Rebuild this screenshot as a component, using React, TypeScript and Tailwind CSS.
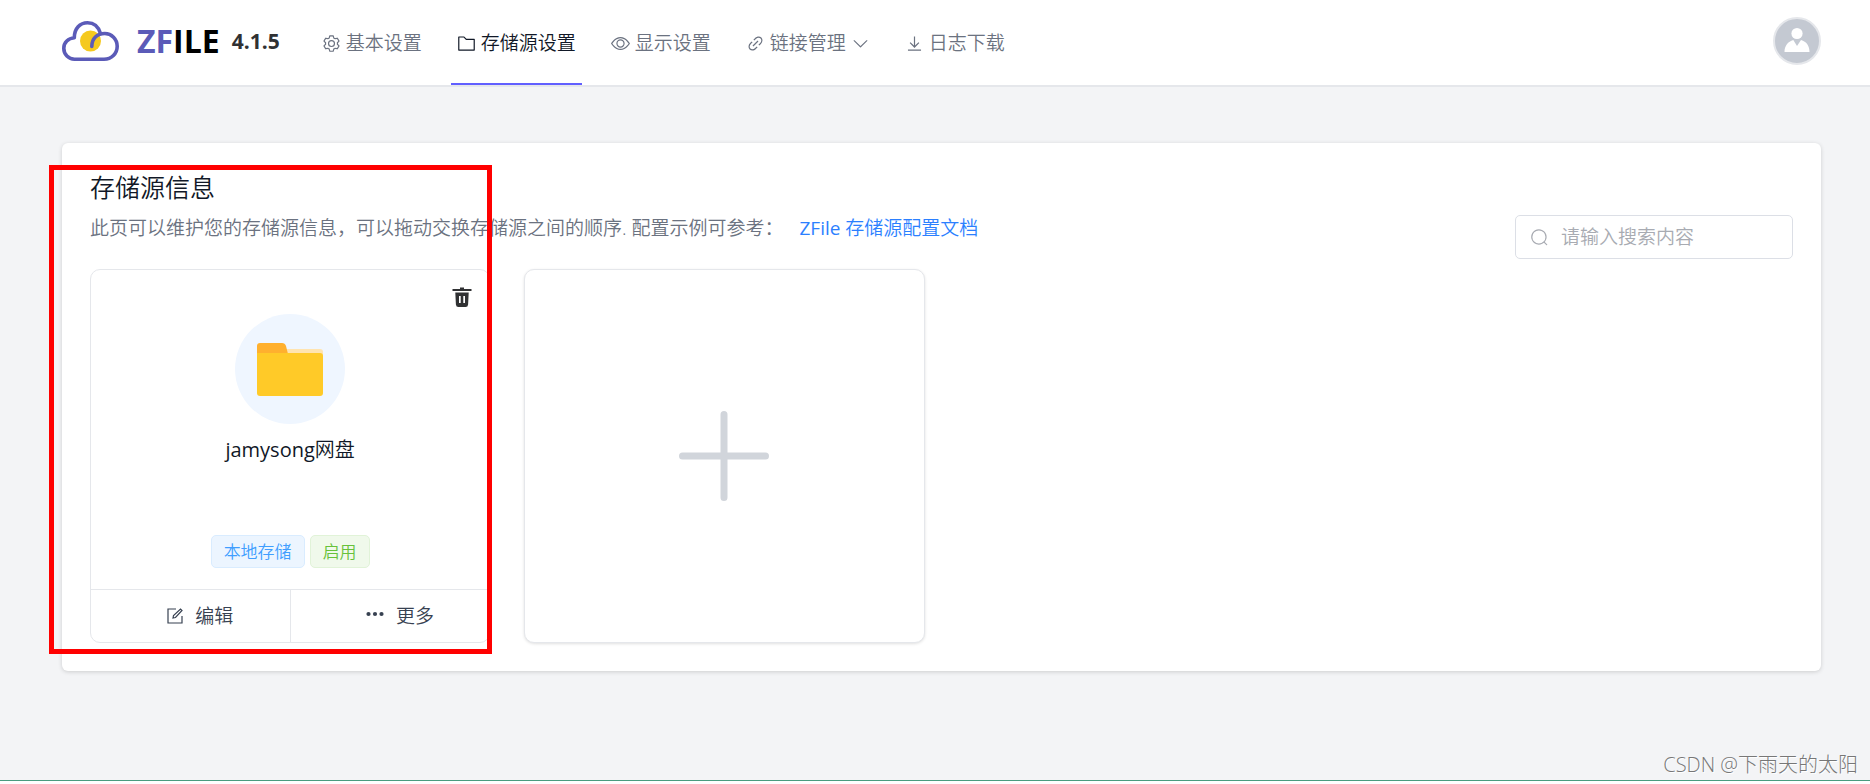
import type { ReactNode } from 'react';

const paths = {
    setting:
        'M600.704 64a32 32 0 0 1 30.464 22.208l35.2 109.376c14.784 7.232 28.928 15.36 42.432 24.512l112.384-24.192a32 32 0 0 1 34.432 15.36L944.32 364.8a32 32 0 0 1-4.032 37.504l-77.12 85.12a357.12 357.12 0 0 1 0 49.024l77.12 85.248a32 32 0 0 1 4.032 37.504l-88.704 153.6a32 32 0 0 1-34.432 15.296L708.8 803.904c-13.44 9.088-27.648 17.28-42.368 24.512l-35.264 109.376A32 32 0 0 1 600.704 960H423.296a32 32 0 0 1-30.464-22.208L357.696 828.48a351.616 351.616 0 0 1-42.56-24.64l-112.32 24.256a32 32 0 0 1-34.432-15.36L79.68 659.2a32 32 0 0 1 4.032-37.504l77.12-85.248a357.12 357.12 0 0 1 0-48.896l-77.12-85.248A32 32 0 0 1 79.68 364.8l88.704-153.6a32 32 0 0 1 34.432-15.296l112.32 24.256c13.568-9.152 27.776-17.408 42.56-24.64l35.2-109.312A32 32 0 0 1 423.232 64H600.64zm-23.424 64H446.72l-36.352 113.088-24.512 11.968a294.113 294.113 0 0 0-34.816 20.096l-22.656 15.36-116.224-25.088-65.28 113.152 79.68 88.192-1.92 27.136a293.12 293.12 0 0 0 0 40.192l1.92 27.136-79.808 88.192 65.344 113.152 116.224-25.024 22.656 15.296a294.113 294.113 0 0 0 34.816 20.096l24.512 11.968L446.72 896h130.688l36.48-113.152 24.448-11.904a288.282 288.282 0 0 0 34.752-20.096l22.592-15.296 116.288 25.024 65.28-113.152-79.744-88.192 1.92-27.136a293.12 293.12 0 0 0 0-40.256l-1.92-27.136 79.808-88.128-65.344-113.152-116.288 24.96-22.592-15.232a287.616 287.616 0 0 0-34.752-20.096l-24.448-11.904L577.344 128zM512 320a192 192 0 1 1 0 384 192 192 0 0 1 0-384zm0 64a128 128 0 1 0 0 256 128 128 0 0 0 0-256z',
    folder:
        'M128 192v640h768V320H485.76L357.504 192H128zm-32-64h287.872l128.384 128H928a32 32 0 0 1 32 32v576a32 32 0 0 1-32 32H96a32 32 0 0 1-32-32V160a32 32 0 0 1 32-32z',
    view:
        'M512 160c320 0 512 352 512 352S832 864 512 864 0 512 0 512s192-352 512-352zm0 64c-225.28 0-384.128 208.064-436.8 288 52.608 79.872 211.456 288 436.8 288 225.28 0 384.128-208.064 436.8-288-52.608-79.872-211.456-288-436.8-288zm0 64a224 224 0 1 1 0 448 224 224 0 0 1 0-448zm0 64a160.192 160.192 0 0 0-160 160c0 88.192 71.744 160 160 160s160-71.808 160-160-71.744-160-160-160z',
    link:
        'M715.648 625.152 670.4 579.904l90.496-90.56c75.008-74.944 85.12-186.368 22.656-248.896-62.528-62.464-173.952-52.352-248.96 22.656L444.16 353.6l-45.248-45.248 90.496-90.496c100.032-99.968 251.968-110.08 339.456-22.656 87.488 87.488 77.312 239.424-22.656 339.456l-90.496 90.496zm-90.496 90.496-90.496 90.496C434.624 906.112 282.688 916.224 195.2 828.8c-87.488-87.488-77.312-239.424 22.656-339.456l90.496-90.496 45.248 45.248-90.496 90.56c-75.008 74.944-85.12 186.368-22.656 248.896 62.528 62.464 173.952 52.352 248.96-22.656l90.496-90.496 45.248 45.248zm0-362.048 45.248 45.248L398.848 670.4 353.6 625.152 625.152 353.6z',
    arrowDown:
        'M831.872 340.864 512 652.672 192.128 340.864a30.592 30.592 0 0 0-42.752 0 29.12 29.12 0 0 0 0 41.6L489.664 714.24a32 32 0 0 0 44.672 0l340.288-331.712a29.12 29.12 0 0 0 0-41.728 30.592 30.592 0 0 0-42.752 0z',
    download:
        'M160 832h704v64H160zM544 128v498l182-182 46 46-260 260-260-260 46-46 182 182V128z',
    search:
        'm795.904 750.72 124.992 124.928a32 32 0 0 1-45.248 45.248L750.656 795.904a416 416 0 1 1 45.248-45.248zM480 832a352 352 0 1 0 0-704 352 352 0 0 0 0 704z',
};

function Icon({ name }: { name: keyof typeof paths }) {
    return (
        <svg viewBox="0 0 1024 1024" fill="currentColor" aria-hidden="true" className="size-[19px] shrink-0">
            <path d={paths[name]} />
        </svg>
    );
}

const navItems: { label: string; icon: keyof typeof paths; active?: boolean; menu?: boolean }[] = [
    { label: '基本设置', icon: 'setting' },
    { label: '存储源设置', icon: 'folder', active: true },
    { label: '显示设置', icon: 'view' },
    { label: '链接管理', icon: 'link', menu: true },
    { label: '日志下载', icon: 'download' },
];

function Logo() {
    return (
        <svg viewBox="0 0 57 40" fill="none" aria-hidden="true" className="h-10 w-[57px]">
            <circle cx="28.5" cy="20" r="10.5" fill="#f5c91e" />
            <path
                d="M38.5 12.5C36.5 6 32 1.8 25.5 1.8C18 1.8 12.3 7.5 12.3 16.8C6.3 17.3 1.8 21.5 1.8 27.2C1.8 33.5 6.5 38.2 12.5 38.2H42C49.5 38.2 55.2 32.5 55.2 25.2C55.2 18 49.5 12.5 42.8 12.5C35 12.5 29.8 17.5 29.8 25.5"
                stroke="#5b5bb8"
                strokeWidth="3.6"
                strokeLinecap="round"
                strokeLinejoin="round"
            />
        </svg>
    );
}

function Header() {
    return (
        <header className="flex h-[87px] items-center border-b-2 border-gray-200 bg-white pr-[49px] pl-[62px]">
            <a href="#" className="mb-[3px] flex items-center">
                <Logo />
                <span className="ml-[18px] text-[32px] leading-10 font-bold text-black">
                    <span className="text-[#5b5bb8]">ZF</span>ILE
                </span>
                <span className="ml-3 text-[21px] font-bold text-[#303133]">4.1.5</span>
            </a>
            <nav className="ml-9 flex h-full flex-1 gap-[23px] whitespace-nowrap">
                {navItems.map((item) => (
                    <a
                        key={item.label}
                        href="#"
                        className={
                            item.active
                                ? 'flex items-center gap-[5px] border-b-2 border-indigo-500 px-1.5 pt-[3px] text-[#111827]'
                                : 'flex items-center gap-[5px] border-b-2 border-transparent px-1.5 pt-[3px] text-[#6b7280]'
                        }
                    >
                        <Icon name={item.icon} />
                        <span>{item.label}</span>
                        {item.menu && <Icon name="arrowDown" />}
                    </a>
                ))}
            </nav>
            <button type="button" aria-label="用户" className="mb-[3px] size-12 overflow-hidden rounded-full border-2 border-gray-200 bg-[#c4c9d2]">
                <svg viewBox="0 0 44 44" fill="#fff" className="size-11">
                    <circle cx="22" cy="14.5" r="5.6" />
                    <path d="M9.5 33C9.5 27 13 22.5 18.3 21L22 27L26 21C31.5 22.5 34.5 27 34.5 33Z" />
                </svg>
            </button>
        </header>
    );
}

function ActionButton({ icon, children }: { icon: ReactNode; children: ReactNode }) {
    return (
        <button type="button" className="flex flex-1 items-center justify-center gap-3 pl-5 text-[#374151]">
            {icon}
            {children}
        </button>
    );
}

function StorageCard() {
    return (
        <article className="relative flex h-[374px] flex-col rounded-[10px] border border-gray-200 bg-white">
            <button type="button" aria-label="删除" className="absolute top-[17px] right-[17px]">
                <svg viewBox="0 0 20 20" fill="#303133" className="size-5">
                    <path d="M8 0.5h4v1.5h7.5v2h-19v-2H8z" />
                    <path
                        fillRule="evenodd"
                        d="M3.3 5.5h13.4l-0.6 12q-0.2 2.5-2.5 2.5h-7.2q-2.3 0-2.5-2.5zM7 9v7h1.7v-7zM11.3 9v7h1.7v-7z"
                    />
                </svg>
            </button>
            <div className="flex flex-1 flex-col items-center pt-11">
                <div className="flex size-[110px] items-center justify-center rounded-full bg-[#eff6ff]">
                    <svg viewBox="0 0 66 53" className="h-[53px] w-[66px]" aria-hidden="true">
                        <path d="M26 6h37q3 0 3 3v12H26z" fill="#ffe4b0" />
                        <path d="M0 3q0-3 3-3h22q3 0 4 3l2 8v8H0z" fill="#ffb02e" />
                        <path d="M0 10h63q3 0 3 3v37q0 3-3 3H3q-3 0-3-3z" fill="#ffca28" />
                    </svg>
                </div>
                <h3 className="mt-3 text-xl leading-7 text-[#111827]">
                    <span className="font-normal">jamysong</span>网盘
                </h3>
                <div className="mt-auto mb-[21px] flex gap-[5px] text-[17px] leading-[31px]">
                    <span className="rounded-[5px] border border-[#d9ecff] bg-[#ecf5ff] px-3 text-[#409eff]">本地存储</span>
                    <span className="rounded-[5px] border border-[#e1f3d8] bg-[#f0f9eb] px-3 text-[#67c23a]">启用</span>
                </div>
            </div>
            <div className="flex h-[53px] divide-x divide-gray-200 border-t border-gray-200">
                <ActionButton
                    icon={
                        <svg viewBox="0 0 16 16" fill="none" stroke="currentColor" strokeWidth="1.2" className="size-4">
                            <path d="M9 1H1v14h14V8" />
                            <path d="M6 10l0.5-2.5 7-6.5 1.5 1.5-6.5 7z" />
                        </svg>
                    }
                >
                    编辑
                </ActionButton>
                <ActionButton
                    icon={
                        <svg viewBox="0 0 18 18" fill="currentColor" className="size-[18px]">
                            <circle cx="2.5" cy="7" r="2.1" />
                            <circle cx="9" cy="7" r="2.1" />
                            <circle cx="15.5" cy="7" r="2.1" />
                        </svg>
                    }
                >
                    更多
                </ActionButton>
            </div>
        </article>
    );
}

export default function App() {
    return (
        <div className="relative flex min-h-screen flex-col bg-[#f3f4f6] font-['Open_Sans','Noto_Sans_CJK_SC',sans-serif] text-[19px] leading-7 font-[350]">
            <Header />
            <main className="flex-1 pt-14 pr-[49px] pl-[62px]">
                <section className="rounded-md bg-white px-7 pt-[30px] pb-7 shadow-[0_1px_4px_rgba(0,0,0,0.16)]">
                    <div className="flex items-start justify-between">
                        <div>
                            <h2 className="text-[25px] leading-7 text-[#111827]">存储源信息</h2>
                            <p className="mt-[13px] text-[#6b7280]">
                                此页可以维护您的存储源信息，可以拖动交换存储源之间的顺序. 配置示例可参考：
                                <a href="#" className="ml-4 text-blue-500">
                                    <span className="font-normal">ZFile</span> 存储源配置文档
                                </a>
                            </p>
                        </div>
                        <label className="mt-[42px] flex h-11 w-[278px] items-center gap-3 rounded-[5px] border border-[#dcdfe6] px-3.5 text-[#a8abb2]">
                            <Icon name="search" />
                            <input
                                type="text"
                                aria-label="搜索"
                                placeholder="请输入搜索内容"
                                className="w-full min-w-0 outline-none placeholder:text-[#a8abb2]"
                            />
                        </label>
                    </div>
                    <div className="mt-2.5 grid grid-cols-4 gap-[34px]">
                        <StorageCard />
                        <button
                            type="button"
                            aria-label="新增存储源"
                            className="flex h-[374px] items-center justify-center rounded-[10px] border border-gray-200 bg-white shadow-[0_1px_3px_rgba(0,0,0,0.12)]"
                        >
                            <svg viewBox="0 0 90 90" stroke="#d1d5db" strokeWidth="7" strokeLinecap="round" className="size-[90px]">
                                <path d="M45 3.5v83M3.5 45h83" />
                            </svg>
                        </button>
                    </div>
                </section>
            </main>
            <footer className="border-b border-[#4a9c80] pr-3 text-right text-xl leading-[30px] font-light text-[#777777] [text-shadow:1px_1px_0_#ffffff]">
                CSDN @下雨天的太阳
            </footer>
            <div className="h-[3px] bg-white" />

            {/* Highlight frame around the first storage source */}
            <div className="pointer-events-none absolute top-[165px] left-[49px] h-[489px] w-[443px] border-5 border-[#ff0000]" />
        </div>
    );
}
